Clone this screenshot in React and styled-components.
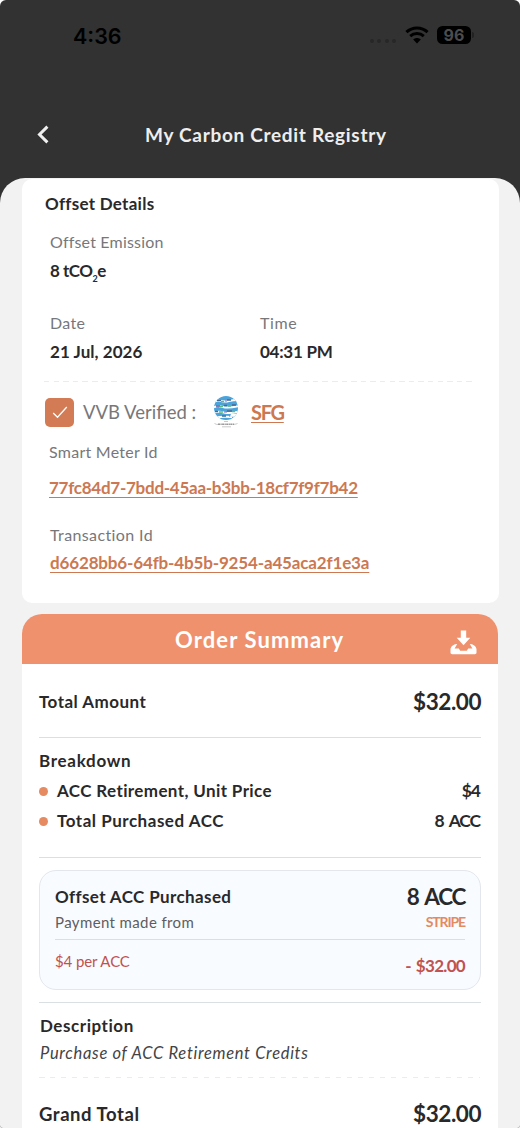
import React from 'react';
import styled, { ThemeProvider, createGlobalStyle } from 'styled-components';

const theme = {
    colors: {
        dark: '#323232',
        page: '#f2f2f2',
        text: '#29292b',
        label: '#77777a',
        link: '#cc7852',
        primary: '#ef916d',
        bullet: '#e58a61',
        danger: '#c0524f',
        line: '#dadfe1',
        dash: '#ececec',
    },
};

const breakdown = [
    { name: 'ACC Retirement, Unit Price', value: '$4', track: -1, nameTrack: 0.38 },
    { name: 'Total Purchased ACC', value: '8 ACC', track: -1.1, nameTrack: 0.52 },
];

const WifiIcon = () => (
    <svg width="24" height="18" viewBox="0 0 24 18" fill="none">
        <path d="M1.400 6.200C7.300.6 16.700.6 22.600 6.200" stroke="#000" strokeWidth="3" />
        <path d="M5.200 10.100c3.800-3.500 9.800-3.500 13.600 0" stroke="#000" strokeWidth="2.900" />
        <path d="M12 17.400l-3.800-3.900c2.100-2 5.500-2 7.600 0z" fill="#000" />
    </svg>
);

const BackIcon = () => (
    <svg width="12" height="19" viewBox="0 0 12 19" fill="none">
        <path d="M10.400 1.600L2.500 9.500l7.900 7.900" stroke="#f0f0f0" strokeWidth="3" />
    </svg>
);

const CheckIcon = () => (
    <svg width="16" height="13" viewBox="0 0 16 13" fill="none">
        <path d="M1.200 7l4.300 4.300L14.800 1" stroke="#fff" strokeWidth="1.300" />
    </svg>
);

const DownloadIcon = () => (
    <svg width="27" height="25" viewBox="0 0 27 25" fill="#fff">
        <path d="M10.800 0.500h5.400v7.200h4.100L13.500 15.200 6.700 7.700h4.100z" />
        <path d="M5.200 14.300l2-.3L4.600 18.500h4.200l1.400 2.200h6.600l1.400-2.200h4.200L19.800 14l2 .3c2 .5 4.700 2.700 4.700 5.200v3c0 1-.7 1.700-1.700 1.700H2.200c-1 0-1.700-.7-1.700-1.700v-3c0-2.500 2.700-4.700 4.700-5.200z" />
    </svg>
);

const GlobeLogo = () => (
    <svg width="26" height="34" viewBox="0 0 26 34">
        <defs>
            <clipPath id="globe">
                <circle cx="13" cy="13" r="12" />
            </clipPath>
        </defs>
        <g clipPath="url(#globe)">
            <rect width="26" height="26" fill="#4ba3dc" />
            <path d="M0 7q4-2 8-1t8 0 10-1M0 12.500q5-2 10-.5t16-1M0 18q5-2 11-.5t15-1M3 22.500q5-1 16-.5" stroke="#fff" strokeWidth="2" fill="none" />
            <path d="M4 5.500h4M14 5h4M3 11h4M11 10.500h3M19 10h4M2 16.500h3M14 16h5M9 21h4" stroke="#49688f" strokeWidth="1.300" />
            <path d="M8 6.500h3M7 11.500h3M15 11h3M19 16.500h3M6 17h4" stroke="#61b97b" strokeWidth="1.300" />
            <path d="M12 6h2M3 12h3M11 17h3M16 21h3" stroke="#9069b5" strokeWidth="1.200" />
            <path d="M18 18.800h8v3h-9z" fill="#fff" />
        </g>
        <path d="M11 26.500h4" stroke="#bbb" strokeWidth=".8" />
        <path d="M1.500 28.500q2 1.500 5 .8" stroke="#bbb" strokeWidth=".8" fill="none" />
        <path d="M5 29.200h16" stroke="#999" strokeWidth="1.600" strokeDasharray="2 .5 1.200 .4" />
        <path d="M21 29.300q2 0 3.500-.8M9 31.800h9" stroke="#bbb" strokeWidth=".8" fill="none" />
    </svg>
);

const App = () => {
    return (
        <ThemeProvider theme={theme}>
            <GlobalStyle />
            <Screen>
                <StatusBar>
                    <Clock>4:36</Clock>
                    <StatusIcons>
                        <Signal>
                            <i />
                            <i />
                            <i />
                            <i />
                        </Signal>
                        <WifiIcon />
                        <Battery>96</Battery>
                    </StatusIcons>
                </StatusBar>
                <NavBar>
                    <BackButton aria-label="Back">
                        <BackIcon />
                    </BackButton>
                    <NavTitle>My Carbon Credit Registry</NavTitle>
                </NavBar>
                <Sheet>
                    <DetailsCard>
                        <CardTitle>Offset Details</CardTitle>
                        <Field $top={18}>
                            <Label $track={0.18}>Offset Emission</Label>
                            <Value $track={-0.5}>
                                8 tCO<Sub>2</Sub>e
                            </Value>
                        </Field>
                        <FieldGrid>
                            <Field $top={0}>
                                <Label $track={0.3}>Date</Label>
                                <Value $track={0.05}>21 Jul, 2026</Value>
                            </Field>
                            <Field $top={0}>
                                <Label $track={0.6}>Time</Label>
                                <Value $track={-0.25}>04:31 PM</Value>
                            </Field>
                        </FieldGrid>
                        <DashedLine $period={9.6} />
                        <VerifiedRow>
                            <CheckBox>
                                <CheckIcon />
                            </CheckBox>
                            <VerifiedText>VVB Verified :</VerifiedText>
                            <GlobeLogo />
                            <VerifierLink href="#">SFG</VerifierLink>
                        </VerifiedRow>
                        <IdBlock $top={13} $gap={16}>
                            <Label $track={0.26}>Smart Meter Id</Label>
                            <IdLink href="#" $track={-0.26}>
                                77fc84d7-7bdd-45aa-b3bb-18cf7f9f7b42
                            </IdLink>
                        </IdBlock>
                        <IdBlock $top={27} $gap={8} $indent={6}>
                            <Label $track={0.38}>Transaction Id</Label>
                            <IdLink href="#" $track={-0.15}>
                                d6628bb6-64fb-4b5b-9254-a45aca2f1e3a
                            </IdLink>
                        </IdBlock>
                    </DetailsCard>

                    <OrderCard>
                        <OrderHeader>
                            <OrderTitle>Order Summary</OrderTitle>
                            <DownloadButton aria-label="Download">
                                <DownloadIcon />
                            </DownloadButton>
                        </OrderHeader>
                        <OrderBody>
                            <TotalRow>
                                <Strong $track={0.46}>Total Amount</Strong>
                                <Amount>$32.00</Amount>
                            </TotalRow>
                            <Line />
                            <Breakdown>
                                <Strong $track={0.7}>Breakdown</Strong>
                                {breakdown.map(({ name, value, track, nameTrack }) => (
                                    <BreakdownItem key={name}>
                                        <Bullet />
                                        <Strong $track={nameTrack}>{name}</Strong>
                                        <ItemValue $track={track}>{value}</ItemValue>
                                    </BreakdownItem>
                                ))}
                            </Breakdown>
                            <Line />
                            <PurchaseBox>
                                <PurchaseRow $height={28}>
                                    <Strong $track={0.38}>Offset ACC Purchased</Strong>
                                    <Amount $track={-1.3}>8 ACC</Amount>
                                </PurchaseRow>
                                <PurchaseRow $height={21}>
                                    <Small>Payment made from</Small>
                                    <Method>STRIPE</Method>
                                </PurchaseRow>
                                <PurchaseFooter>
                                    <Rate>$4 per ACC</Rate>
                                    <Charge>- $32.00</Charge>
                                </PurchaseFooter>
                            </PurchaseBox>
                            <Line />
                            <Description>
                                <Strong $track={0.55}>Description</Strong>
                                <em>Purchase of ACC Retirement Credits</em>
                            </Description>
                            <DashedLine $period={11} />
                            <GrandRow>
                                <GrandTotal>Grand Total</GrandTotal>
                                <Amount>$32.00</Amount>
                            </GrandRow>
                        </OrderBody>
                    </OrderCard>
                </Sheet>
            </Screen>
        </ThemeProvider>
    );
};

const GlobalStyle = createGlobalStyle`
    * {
        box-sizing: border-box;
    }
    body {
        margin: 0;
        background: #fff;
        font-family: Lato, 'Liberation Sans', sans-serif;
    }
    button {
        padding: 0;
        border: 0;
        background: none;
    }
    svg {
        display: block;
        flex: none;
    }
`;

const Screen = styled.div`
    width: 520px;
    height: 1128px;
    display: flex;
    flex-direction: column;
    overflow: hidden;
    border-radius: 6px 6px 3px 3px;
    background: ${({ theme }) => theme.colors.dark};
    color: ${({ theme }) => theme.colors.text};
`;

const StatusBar = styled.div`
    height: 70px;
    flex: none;
    display: flex;
    justify-content: space-between;
    padding: 0 46px 0 73px;
    color: #000;
    font-family: Inter, sans-serif;
`;

const Clock = styled.span`
    padding-top: 22px;
    font-size: 21.5px;
    font-weight: 600;
    line-height: 28px;
`;

const StatusIcons = styled.div`
    height: 20px;
    margin-top: 25px;
    display: flex;
    align-items: center;
`;

const Signal = styled.div`
    display: flex;
    gap: 3.5px;
    margin: 12px 9px 0 0;
    i {
        width: 4px;
        height: 4px;
        border-radius: 2px;
        background: #272727;
    }
`;

const Battery = styled.div`
    position: relative;
    width: 34px;
    height: 18px;
    margin: -1px 3px 0 8px;
    border-radius: 5.5px;
    background: #000;
    color: #4c4c4c;
    font-size: 16px;
    font-weight: 700;
    line-height: 18px;
    text-align: center;
    &::after {
        content: '';
        position: absolute;
        top: 6px;
        right: -3px;
        width: 2px;
        height: 6px;
        border-radius: 0 2px 2px 0;
        background: #222;
    }
`;

const NavBar = styled.div`
    height: 108px;
    flex: none;
    display: flex;
    align-items: flex-start;
    padding: 55px 0 0 37px;
`;

const BackButton = styled.button`
    width: 108px;
`;

const NavTitle = styled.h1`
    margin: 0;
    color: #eee;
    font-size: 19px;
    font-weight: 700;
    line-height: 20px;
    letter-spacing: 0.7px;
`;

const Sheet = styled.main`
    flex: 1;
    padding: 1px 21px 0 22px;
    border-radius: 25px 25px 0 0;
    background: ${({ theme }) => theme.colors.page};
`;

const DetailsCard = styled.section`
    height: 424px;
    margin-bottom: 11px;
    padding: 15px 22px 0;
    border-radius: 10px;
    background: #fff;
`;

const CardTitle = styled.h2`
    margin: 0;
    padding-left: 1px;
    font-size: 17px;
    font-weight: 700;
    line-height: 20px;
    letter-spacing: 0.28px;
`;

const Field = styled.div`
    margin-top: ${({ $top }) => $top}px;
    padding-left: 6px;
    display: flex;
    flex-direction: column;
    gap: 9px;
`;

const FieldGrid = styled.div`
    margin-top: 32px;
    display: grid;
    grid-template-columns: 210px 1fr;
`;

const Label = styled.span`
    color: ${({ theme }) => theme.colors.label};
    font-size: 16px;
    line-height: 20px;
    letter-spacing: ${({ $track }) => $track}px;
`;

const Value = styled.span`
    font-size: 17px;
    font-weight: 700;
    line-height: 20px;
    letter-spacing: ${({ $track }) => $track}px;
`;

const Sub = styled.span`
    position: relative;
    top: 5px;
    font-size: 9px;
    line-height: 1;
`;

const DashedLine = styled.div`
    height: 1px;
    margin: 19px 1px 0 0;
    background: ${({ theme, $period }) =>
        `repeating-linear-gradient(90deg, ${theme.colors.dash} 0 5.5px, transparent 5.5px ${$period}px)`};
`;

const VerifiedRow = styled.div`
    height: 34px;
    margin-top: 13px;
    display: flex;
    align-items: center;
`;

const CheckBox = styled.span`
    width: 29px;
    height: 29px;
    margin: 1px 9px 0 1px;
    display: flex;
    align-items: center;
    justify-content: center;
    border-radius: 5px;
    background: #d27b54;
`;

const VerifiedText = styled.span`
    width: 130px;
    color: ${({ theme }) => theme.colors.label};
    font-size: 18.5px;
    line-height: 24px;
`;

const VerifierLink = styled.a`
    margin: -1px 0 0 12px;
    color: ${({ theme }) => theme.colors.link};
    font-size: 20px;
    font-weight: 700;
    line-height: 24px;
    letter-spacing: -1.3px;
    text-decoration: underline 1px;
    text-underline-offset: 2px;
`;

const IdBlock = styled.div`
    margin-top: ${({ $top }) => $top}px;
    padding-left: ${({ $indent = 5 }) => $indent}px;
    display: flex;
    flex-direction: column;
    align-items: flex-start;
    gap: ${({ $gap }) => $gap}px;
`;

const IdLink = styled.a`
    color: ${({ theme }) => theme.colors.link};
    font-size: 17px;
    font-weight: 700;
    line-height: 20px;
    letter-spacing: ${({ $track }) => $track}px;
    text-decoration: underline 1px;
    text-underline-offset: 3px;
`;

const OrderCard = styled.section`
    width: 476px;
    border-radius: 20px 20px 0 0;
    overflow: hidden;
    background: #fff;
`;

const OrderHeader = styled.header`
    height: 50px;
    display: flex;
    align-items: center;
    padding: 0 21px 0 153px;
    background: ${({ theme }) => theme.colors.primary};
`;

const OrderTitle = styled.h2`
    flex: 1;
    margin: 0;
    padding-top: 2px;
    color: #fff;
    font-size: 22px;
    font-weight: 700;
    line-height: 28px;
    letter-spacing: 1.1px;
`;

const DownloadButton = styled.button`
    margin-top: 6px;
`;

const OrderBody = styled.div`
    padding: 0 17px;
`;

const Row = styled.div`
    display: flex;
    align-items: center;
    justify-content: space-between;
`;

const TotalRow = styled(Row)`
    height: 73px;
    padding-top: 2px;
`;

const Strong = styled.span`
    font-size: 17px;
    font-weight: 700;
    line-height: 20px;
    letter-spacing: ${({ $track }) => $track}px;
`;

const Amount = styled.span`
    font-size: 22.5px;
    font-weight: 700;
    line-height: 26px;
    letter-spacing: ${({ $track = -0.45 }) => $track}px;
    word-spacing: 2.5px;
`;

const Line = styled.div`
    height: 1px;
    background: ${({ theme }) => theme.colors.line};
`;

const Breakdown = styled.div`
    height: 119px;
    padding-top: 13px;
    display: flex;
    flex-direction: column;
    gap: 10px;
`;

const BreakdownItem = styled.div`
    height: 20px;
    display: flex;
    align-items: center;
`;

const Bullet = styled.i`
    width: 9px;
    height: 9px;
    margin-right: 9px;
    border-radius: 50%;
    background: ${({ theme }) => theme.colors.bullet};
`;

const ItemValue = styled.span`
    margin: -1px 1px 0 auto;
    font-size: 17.5px;
    font-weight: 700;
    line-height: 20px;
    letter-spacing: ${({ $track }) => $track}px;
    word-spacing: 2.5px;
`;

const PurchaseBox = styled.div`
    height: 120px;
    margin: 12px 0;
    padding: 12px 15px 0;
    border: 1px solid #e3e7ed;
    border-radius: 17px;
    background: #f8fbff;
`;

const PurchaseRow = styled(Row)`
    height: ${({ $height }) => $height}px;
`;

const Small = styled.span`
    color: #5d5e61;
    font-size: 15px;
    line-height: 20px;
    letter-spacing: 0.38px;
`;

const Method = styled.span`
    color: #e48a5e;
    font-size: 14px;
    font-weight: 700;
    line-height: 20px;
    letter-spacing: -1.1px;
`;

const PurchaseFooter = styled(Row)`
    align-items: flex-start;
    margin-top: 7px;
    padding-top: 11px;
    border-top: 1px solid ${({ theme }) => theme.colors.line};
    color: ${({ theme }) => theme.colors.danger};
    line-height: 20px;
`;

const Rate = styled.span`
    font-size: 15px;
    letter-spacing: -0.1px;
`;

const Charge = styled.span`
    padding-top: 5px;
    font-size: 17px;
    font-weight: 700;
    letter-spacing: -0.7px;
    word-spacing: 1.5px;
`;

const Description = styled.div`
    padding: 13px 0 0 1px;
    display: flex;
    flex-direction: column;
    gap: 7px;
    em {
        color: #434345;
        font-size: 16.5px;
        line-height: 20px;
        letter-spacing: 0.69px;
    }
    & + div {
        margin-top: 14px;
    }
`;

const GrandRow = styled(Row)`
    height: 72px;
`;

const GrandTotal = styled.strong`
    font-size: 18.5px;
    letter-spacing: 0.55px;
`;

export default App;
